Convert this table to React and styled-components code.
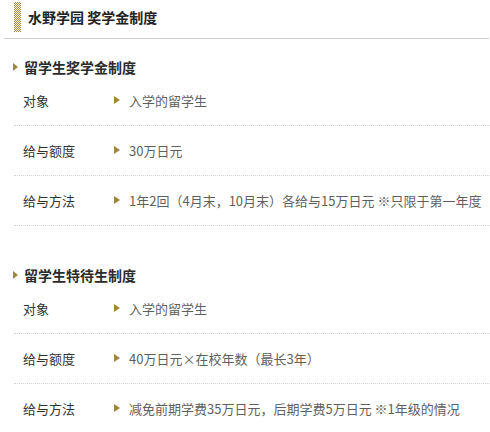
import React from "react";
import styled, { createGlobalStyle } from "styled-components";

const GlobalStyle = createGlobalStyle`
  body {
    margin: 0;
    background: #fff;
    font-family: "Noto Sans CJK SC", "Noto Sans", sans-serif;
    color: #333;
  }
`;

const Page = styled.div`
  width: 490px;
`;

const Header = styled.div`
  margin: 0 1px 0 4px;
  height: 38px;
  display: flex;
  align-items: center;
  gap: 7px;
  padding-left: 10px;
  border-bottom: 1px solid #cfcfcf;
`;

const Stripe = styled.span`
  width: 7px;
  height: 30px;
  margin-top: -4px;
  background-color: #f4efd9;
  background-image: repeating-conic-gradient(#a68f45 0 25%, #f6f1dc 0 50%);
  background-size: 2px 2px;
`;

const Title = styled.h1`
  margin: -4px 0 0;
  font-size: 14px;
  font-weight: bold;
  color: #222;
`;

const Section = styled.section`
  padding-left: 13px;
  margin-top: ${(p) => (p.first ? "19px" : "40px")};
`;

const Arrow = styled.span`
  width: 0;
  height: 0;
  border-top: ${(p) => p.h / 2}px solid transparent;
  border-bottom: ${(p) => p.h / 2}px solid transparent;
  border-left: ${(p) => p.w}px solid #9f8739;
  flex-shrink: 0;
`;

const Heading = styled.h2`
  margin: 0;
  display: flex;
  align-items: center;
  gap: 6px;
  height: 18px;
  font-size: 14px;
  font-weight: bold;
  color: #2b2b2b;
`;

const Rows = styled.div`
  margin-left: 1px;
`;

// each row is 50px tall, dotted rule included
const Row = styled.div`
  display: flex;
  align-items: center;
  box-sizing: border-box;
  height: 50px;
  padding: 0 0 1px 9px;
  border-bottom: 1px dotted #d4d4d4;
  font-size: 13px;
`;

const Label = styled.div`
  width: 91px;
  color: #333;
`;

const Value = styled.div`
  display: flex;
  align-items: center;
  gap: 9px;
  color: #5f5f5f;
  white-space: nowrap;
`;

const sections = [
  {
    title: "留学生奖学金制度",
    rows: [
      ["对象", "入学的留学生"],
      ["给与额度", "30万日元"],
      ["给与方法", "1年2回（4月末，10月末）各给与15万日元 ※只限于第一年度"],
    ],
  },
  {
    title: "留学生特待生制度",
    rows: [
      ["对象", "入学的留学生"],
      ["给与额度", "40万日元×在校年数（最长3年）"],
      ["给与方法", "减免前期学费35万日元，后期学费5万日元 ※1年级的情况"],
    ],
  },
];

const App = () => {
  return (
    <Page>
      <GlobalStyle />
      <Header>
        <Stripe />
        <Title>水野学园 奖学金制度</Title>
      </Header>
      {sections.map((s, i) => (
        <Section key={s.title} first={i === 0}>
          <Heading>
            <Arrow w={5} h={9} />
            {s.title}
          </Heading>
          <Rows>
            {s.rows.map(([label, value]) => (
              <Row key={label}>
                <Label>{label}</Label>
                <Value>
                  <Arrow w={6} h={9} />
                  {value}
                </Value>
              </Row>
            ))}
          </Rows>
        </Section>
      ))}
    </Page>
  );
};

export default App;
